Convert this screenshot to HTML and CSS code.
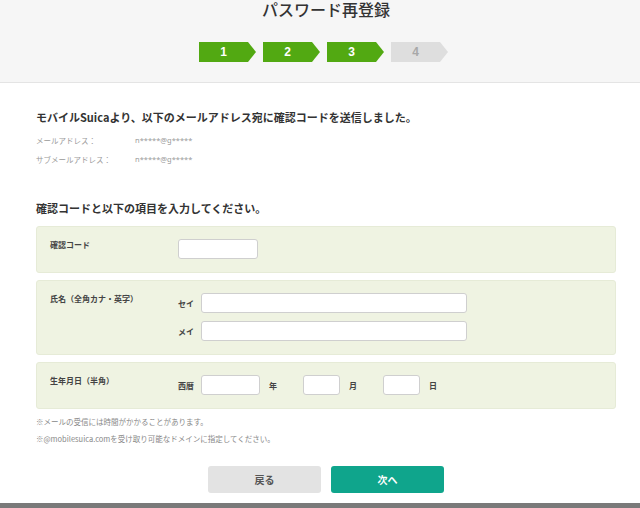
FILE: index.html
```html
<!DOCTYPE html>
<html lang="ja">
<head>
<meta charset="utf-8">
<title>パスワード再登録</title>
<link rel="stylesheet" href="styles.css">
</head>
<body>
<header class="header">
  <h1 class="title">パスワード再登録</h1>
  <ol class="steps">
    <li class="step done">1</li>
    <li class="step done">2</li>
    <li class="step done">3</li>
    <li class="step todo">4</li>
  </ol>
</header>
<main class="main">
  <h2 class="heading first">モバイルSuicaより、以下のメールアドレス宛に確認コードを送信しました。</h2>
  <dl class="mail">
    <div class="mail-row"><dt>メールアドレス：</dt><dd>n*****@g*****</dd></div>
    <div class="mail-row"><dt>サブメールアドレス：</dt><dd>n*****@g*****</dd></div>
  </dl>
  <h2 class="heading second">確認コードと以下の項目を入力してください。</h2>
  <div class="panel">
    <div class="label">確認コード</div>
    <div class="fields"><input class="input code" type="text"></div>
  </div>
  <div class="panel">
    <div class="label">氏名（全角カナ・英字）</div>
    <div class="fields column">
      <div class="row"><span class="sub">セイ</span><input class="input name" type="text"></div>
      <div class="row"><span class="sub">メイ</span><input class="input name" type="text"></div>
    </div>
  </div>
  <div class="panel">
    <div class="label">生年月日（半角）</div>
    <div class="fields">
      <div class="row">
        <span class="sub">西暦</span><input class="input year" type="text"><span class="unit">年</span>
        <input class="input md" type="text"><span class="unit">月</span>
        <input class="input md" type="text"><span class="unit">日</span>
      </div>
    </div>
  </div>
  <p class="note">※メールの受信には時間がかかることがあります。</p>
  <p class="note">※@mobilesuica.comを受け取り可能なドメインに指定してください。</p>
  <div class="buttons">
    <button class="btn back" type="button">戻る</button>
    <button class="btn next" type="button">次へ</button>
  </div>
</main>
<div class="footer-bar"></div>
</body>
</html>
```
FILE: styles.css
```css
* { box-sizing: border-box; }
html, body { margin: 0; padding: 0; }
body {
  width: 640px;
  height: 508px;
  overflow: hidden;
  background: #fff;
  color: #333;
  font-family: "Noto Sans CJK JP", "Noto Sans", "Liberation Sans", sans-serif;
  position: relative;
}
.header {
  height: 83px;
  background: #f6f6f6;
  border-bottom: 1px solid #e4e4e4;
  padding-top: 0;
}
.title {
  margin: 0;
  font-size: 16px;
  line-height: 19px;
  font-weight: 500;
  text-align: center;
  padding-left: 12px;
  color: #333;
}
.steps {
  list-style: none;
  margin: 23px 0 0 199px;
  padding: 0;
  display: flex;
  gap: 7px;
}
.step {
  width: 57px;
  height: 20px;
  clip-path: polygon(0 0, 49px 0, 57px 50%, 49px 100%, 0 100%);
  font-family: "Liberation Sans", sans-serif;
  font-weight: bold;
  font-size: 12px;
  line-height: 20px;
  padding-right: 8px;
  text-align: center;
}
.step.done { background: #52a912; color: #fff; }
.step.todo { background: #dedede; color: #a8a8a8; }
.main {
  margin-left: 36px;
  width: 580px;
}
.heading {
  margin: 0;
  font-size: 11px;
  line-height: 14px;
  font-weight: bold;
  color: #333;
}
.heading.first { margin-top: 27px; }
.heading.second { margin-top: 32px; }
.mail { margin: 7px 0 0; }
.mail-row {
  display: flex;
  font-size: 7.5px;
  line-height: 19px;
  color: #999;
}
.mail-row dt { width: 99px; }
.mail-row dd { margin: 0; font-family: "Noto Sans", "Liberation Sans", sans-serif; }
.panel {
  margin-top: 7px;
  background: #eff3e2;
  border: 1px solid #e6ebd7;
  border-radius: 3px;
  padding: 12px 13px 13px;
  display: flex;
}
.heading.second + .panel { margin-top: 11px; }
.label {
  width: 128px;
  font-size: 8px;
  font-weight: bold;
  line-height: 12px;
  padding-top: 0;
  color: #444;
}
.fields { display: flex; }
.fields.column { flex-direction: column; gap: 8px; }
.row { display: flex; align-items: center; }
.sub {
  width: 23px;
  font-size: 8px;
  font-weight: bold;
  color: #444;
}
.unit {
  font-size: 8px;
  font-weight: bold;
  color: #444;
  margin-left: 9px;
  width: 34px;
}
.input {
  height: 20px;
  background: #fff;
  border: 1px solid #cfcfcf;
  border-radius: 3px;
  padding: 0 4px;
  margin: 0;
  outline: none;
}
.code { width: 80px; }
.name { width: 266px; }
.year { width: 59px; }
.md { width: 37px; }
.note {
  margin: 0;
  font-size: 7.5px;
  line-height: 17px;
  color: #888;
}
.panel + .note { margin-top: 4px; }
.buttons {
  margin-top: 19px;
  display: flex;
  justify-content: center;
  gap: 10px;
  padding-left: 0;
}
.btn {
  width: 113px;
  height: 27px;
  border: none;
  border-radius: 3px;
  font-family: "Noto Sans CJK JP", sans-serif;
  font-size: 10px;
  font-weight: bold;
  cursor: pointer;
}
.back { background: #e3e3e3; color: #555; }
.next { background: #0fa58c; color: #fff; }
.footer-bar {
  position: absolute;
  left: 0;
  right: 0;
  bottom: 0;
  height: 5px;
  background: #7a7a7a;
}
```
